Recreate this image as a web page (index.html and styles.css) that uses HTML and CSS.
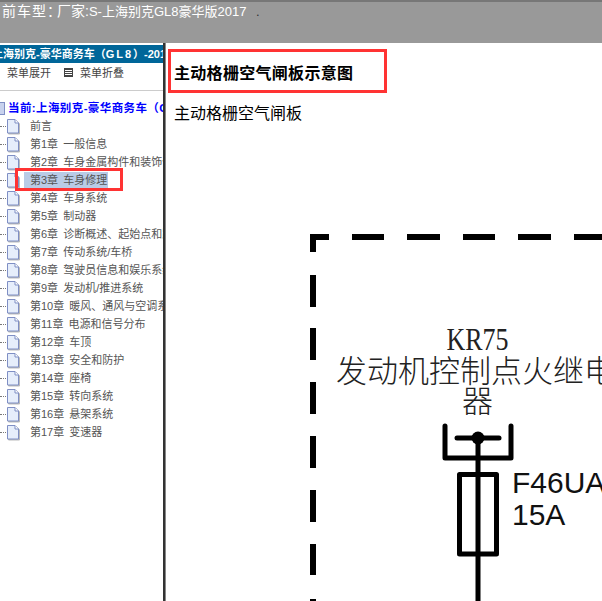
FILE: index.html
```html
<!DOCTYPE html>
<html>
<head>
<meta charset="utf-8">
<title>主动格栅空气闸板示意图</title>
<link rel="stylesheet" href="styles.css">
</head>
<body>
<header class="topbar">
	<span class="car-label">前车型：</span>
	<span class="car-name"><span class="car-maker">厂家:</span>S-上海别克GL8豪华版2017</span>
	<span class="car-dot">.</span>
</header>
<section class="layout">
	<nav class="side">
		<div class="side-title">上海别克-豪华商务车（<span class="side-model">GL8</span>）-2017</div>
		<div class="side-tools">
			<span class="tool-open">菜单展开</span>
			<span class="tool-icon"></span>
			<span>菜单折叠</span>
		</div>
		<div class="tree-root"><span class="root-icon"></span>当前:上海别克-豪华商务车（GL8）</div>
		<ul class="tree">
			<li><span class="dots"></span><svg class="page" viewBox="0 0 13 15"><path d="M1.5.5H9L12.5 4V14H1.5Z" fill="#e6eefb" stroke="#7f8fc4"/><path d="M9 .5V4H12.5" fill="#fff" stroke="#7f8fc4"/></svg><span class="label">前言</span></li>
			<li><span class="dots"></span><svg class="page" viewBox="0 0 13 15"><path d="M1.5.5H9L12.5 4V14H1.5Z" fill="#e6eefb" stroke="#7f8fc4"/><path d="M9 .5V4H12.5" fill="#fff" stroke="#7f8fc4"/></svg><span class="label">第1章 一般信息</span></li>
			<li><span class="dots"></span><svg class="page" viewBox="0 0 13 15"><path d="M1.5.5H9L12.5 4V14H1.5Z" fill="#e6eefb" stroke="#7f8fc4"/><path d="M9 .5V4H12.5" fill="#fff" stroke="#7f8fc4"/></svg><span class="label">第2章 车身金属构件和装饰件</span></li>
			<li><span class="dots"></span><svg class="page" viewBox="0 0 13 15"><path d="M1.5.5H9L12.5 4V14H1.5Z" fill="#e6eefb" stroke="#7f8fc4"/><path d="M9 .5V4H12.5" fill="#fff" stroke="#7f8fc4"/></svg><span class="label current">第3章 车身修理</span></li>
			<li><span class="dots"></span><svg class="page" viewBox="0 0 13 15"><path d="M1.5.5H9L12.5 4V14H1.5Z" fill="#e6eefb" stroke="#7f8fc4"/><path d="M9 .5V4H12.5" fill="#fff" stroke="#7f8fc4"/></svg><span class="label">第4章 车身系统</span></li>
			<li><span class="dots"></span><svg class="page" viewBox="0 0 13 15"><path d="M1.5.5H9L12.5 4V14H1.5Z" fill="#e6eefb" stroke="#7f8fc4"/><path d="M9 .5V4H12.5" fill="#fff" stroke="#7f8fc4"/></svg><span class="label">第5章 制动器</span></li>
			<li><span class="dots"></span><svg class="page" viewBox="0 0 13 15"><path d="M1.5.5H9L12.5 4V14H1.5Z" fill="#e6eefb" stroke="#7f8fc4"/><path d="M9 .5V4H12.5" fill="#fff" stroke="#7f8fc4"/></svg><span class="label">第6章 诊断概述、起始点和路径</span></li>
			<li><span class="dots"></span><svg class="page" viewBox="0 0 13 15"><path d="M1.5.5H9L12.5 4V14H1.5Z" fill="#e6eefb" stroke="#7f8fc4"/><path d="M9 .5V4H12.5" fill="#fff" stroke="#7f8fc4"/></svg><span class="label">第7章 传动系统/车桥</span></li>
			<li><span class="dots"></span><svg class="page" viewBox="0 0 13 15"><path d="M1.5.5H9L12.5 4V14H1.5Z" fill="#e6eefb" stroke="#7f8fc4"/><path d="M9 .5V4H12.5" fill="#fff" stroke="#7f8fc4"/></svg><span class="label">第8章 驾驶员信息和娱乐系统</span></li>
			<li><span class="dots"></span><svg class="page" viewBox="0 0 13 15"><path d="M1.5.5H9L12.5 4V14H1.5Z" fill="#e6eefb" stroke="#7f8fc4"/><path d="M9 .5V4H12.5" fill="#fff" stroke="#7f8fc4"/></svg><span class="label">第9章 发动机/推进系统</span></li>
			<li><span class="dots"></span><svg class="page" viewBox="0 0 13 15"><path d="M1.5.5H9L12.5 4V14H1.5Z" fill="#e6eefb" stroke="#7f8fc4"/><path d="M9 .5V4H12.5" fill="#fff" stroke="#7f8fc4"/></svg><span class="label">第10章 暖风、通风与空调系统</span></li>
			<li><span class="dots"></span><svg class="page" viewBox="0 0 13 15"><path d="M1.5.5H9L12.5 4V14H1.5Z" fill="#e6eefb" stroke="#7f8fc4"/><path d="M9 .5V4H12.5" fill="#fff" stroke="#7f8fc4"/></svg><span class="label">第11章 电源和信号分布</span></li>
			<li><span class="dots"></span><svg class="page" viewBox="0 0 13 15"><path d="M1.5.5H9L12.5 4V14H1.5Z" fill="#e6eefb" stroke="#7f8fc4"/><path d="M9 .5V4H12.5" fill="#fff" stroke="#7f8fc4"/></svg><span class="label">第12章 车顶</span></li>
			<li><span class="dots"></span><svg class="page" viewBox="0 0 13 15"><path d="M1.5.5H9L12.5 4V14H1.5Z" fill="#e6eefb" stroke="#7f8fc4"/><path d="M9 .5V4H12.5" fill="#fff" stroke="#7f8fc4"/></svg><span class="label">第13章 安全和防护</span></li>
			<li><span class="dots"></span><svg class="page" viewBox="0 0 13 15"><path d="M1.5.5H9L12.5 4V14H1.5Z" fill="#e6eefb" stroke="#7f8fc4"/><path d="M9 .5V4H12.5" fill="#fff" stroke="#7f8fc4"/></svg><span class="label">第14章 座椅</span></li>
			<li><span class="dots"></span><svg class="page" viewBox="0 0 13 15"><path d="M1.5.5H9L12.5 4V14H1.5Z" fill="#e6eefb" stroke="#7f8fc4"/><path d="M9 .5V4H12.5" fill="#fff" stroke="#7f8fc4"/></svg><span class="label">第15章 转向系统</span></li>
			<li><span class="dots"></span><svg class="page" viewBox="0 0 13 15"><path d="M1.5.5H9L12.5 4V14H1.5Z" fill="#e6eefb" stroke="#7f8fc4"/><path d="M9 .5V4H12.5" fill="#fff" stroke="#7f8fc4"/></svg><span class="label">第16章 悬架系统</span></li>
			<li><span class="dots"></span><svg class="page" viewBox="0 0 13 15"><path d="M1.5.5H9L12.5 4V14H1.5Z" fill="#e6eefb" stroke="#7f8fc4"/><path d="M9 .5V4H12.5" fill="#fff" stroke="#7f8fc4"/></svg><span class="label">第17章 变速器</span></li>
		</ul>
		<div class="mark mark-tree"></div>
	</nav>
	<section class="main">
		<h1 class="doc-title">主动格栅空气闸板示意图</h1>
		<p class="doc-text">主动格栅空气闸板</p>
		<svg class="diagram" viewBox="0 0 436 401" width="436" height="401">
			<g class="dash">
				<path d="M163 36H147V51"/>
				<path d="M186 36H218M241 36H274M297 36H329M352 36H385M408 36H440"/>
				<path d="M147 74V106M147 127V159M147 181V213M147 235V267M147 289V321M147 343V374M147 398V420"/>
			</g>
			<text class="kr" x="311.5" y="149" textLength="62" lengthAdjust="spacingAndGlyphs">KR75</text>
			<text class="relay" x="170" y="181">发动机控制点火继电</text>
			<text class="relay" x="296" y="211">器</text>
			<g class="fuse">
				<path d="M279 225V257H345V225"/>
				<path d="M291 237H333"/>
				<path d="M312 237V401"/>
				<path d="M293.500 273.500H330.500V353H293.500Z"/>
			</g>
			<circle cx="312" cy="237" r="6.500"/>
			<text class="fuse-text" x="346" y="292">F46UA</text>
			<text class="fuse-text" x="346" y="324">15A</text>
		</svg>
	</section>
</section>
<div class="mark mark-title"></div>
</body>
</html>
```

FILE: styles.css
```css
html, body {
	margin: 0;
	height: 100%;
	overflow: hidden;
	background: #fff;
}
body {
	font-family: "Liberation Sans", "Noto Sans CJK SC", sans-serif;
	position: relative;
}
.topbar {
	height: 41px;
	background: #999;
	border-top: 2px solid #777;
	color: #fff;
	font-size: 13px;
	line-height: 19px;
	display: flex;
	padding-left: 2px;
	white-space: nowrap;
}
.car-label {
	width: 55px;
	font-size: 14px;
	letter-spacing: 1px;
}
.car-name {
	width: 199px;
}
.car-maker {
	font-size: 14px;
}
.car-dot {
	color: #333;
}
.layout {
	display: flex;
	height: 558px;
}
.side {
	width: 163px;
	padding-top: 2px;
	background: #fff;
	border-right: 2px solid #333;
	overflow: hidden;
	flex: none;
	position: relative;
}
.side-title {
	height: 18px;
	background: #069;
	color: #fff;
	font-size: 11px;
	font-weight: bold;
	line-height: 18px;
	white-space: nowrap;
	overflow: hidden;
	text-indent: -8px;
}
.side-model {
	letter-spacing: 2px;
}
.side-tools {
	height: 27px;
	border-bottom: 1px solid #ccc;
	display: flex;
	align-items: flex-start;
	font-size: 11px;
	line-height: 20px;
	color: #444;
	padding-left: 7px;
}
.tool-open {
	width: 57px;
}
.tool-icon {
	width: 7px;
	height: 7px;
	margin-top: 5px;
	margin-right: 7px;
	border: 1px solid #444;
	background: repeating-linear-gradient(#444 0 1px, #fff 1px 2px);
}
.tree-root {
	height: 26px;
	line-height: 34px;
	font-size: 11.500px;
	letter-spacing: .4px;
	font-weight: bold;
	color: #00f;
	white-space: nowrap;
	padding-left: 8px;
	position: relative;
}
.root-icon {
	position: absolute;
	left: -3px;
	top: 11px;
	width: 6px;
	height: 11px;
	background: #c8d2ee;
	border: 1px solid #7f8fc4;
}
.tree {
	list-style: none;
	margin: 0;
	padding: 0;
}
.tree li {
	height: 18px;
	display: flex;
	align-items: center;
	white-space: nowrap;
}
.dots {
	width: 6px;
	border-top: 1px dotted #777;
	flex: none;
}
.page {
	width: 13px;
	height: 15px;
	flex: none;
	filter: drop-shadow(1px 1px 0 #bbb);
}
.label {
	margin-left: 11px;
	padding: 1px 0;
	font-size: 11px;
	line-height: 14px;
	word-spacing: 2px;
	color: #555;
}
.label.current {
	margin-left: 5px;
	background: #b9cbe6;
	padding: 1px 1px 2px 6px;
}
.mark {
	position: absolute;
	border: 3px solid #f33;
	box-sizing: border-box;
}
.mark-tree {
	left: 15px;
	top: 125px;
	width: 108px;
	height: 23px;
}
.mark-title {
	left: 168px;
	top: 49px;
	width: 219px;
	height: 44px;
}
.main {
	flex: 1;
	min-width: 0;
	overflow: hidden;
	border-left: 1px solid #888;
	padding-left: 8px;
	color: #000;
}
.doc-title {
	margin: 21px 0 0;
	font-size: 16px;
	line-height: 20px;
	letter-spacing: .3px;
	font-weight: bold;
	white-space: nowrap;
}
.doc-text {
	margin: 20px 0 0;
	font-size: 16px;
	line-height: 20px;
	white-space: nowrap;
}
.diagram {
	display: block;
	margin-left: -8px;
	margin-top: 77px;
}
.dash path {
	fill: none;
	stroke: #000;
	stroke-width: 6px;
}
.fuse path {
	fill: none;
	stroke: #000;
	stroke-width: 5px;
	stroke-linejoin: round;
	stroke-linecap: round;
}
.kr {
	font-family: "Liberation Serif", serif;
	font-size: 32px;
	text-anchor: middle;
	fill: #222;
}
.relay {
	font-family: "Noto Sans CJK SC", sans-serif;
	font-weight: 300;
	font-size: 31px;
	fill: #222;
}
.fuse-text {
	font-family: "Liberation Sans", sans-serif;
	font-size: 30px;
	fill: #111;
}
```
